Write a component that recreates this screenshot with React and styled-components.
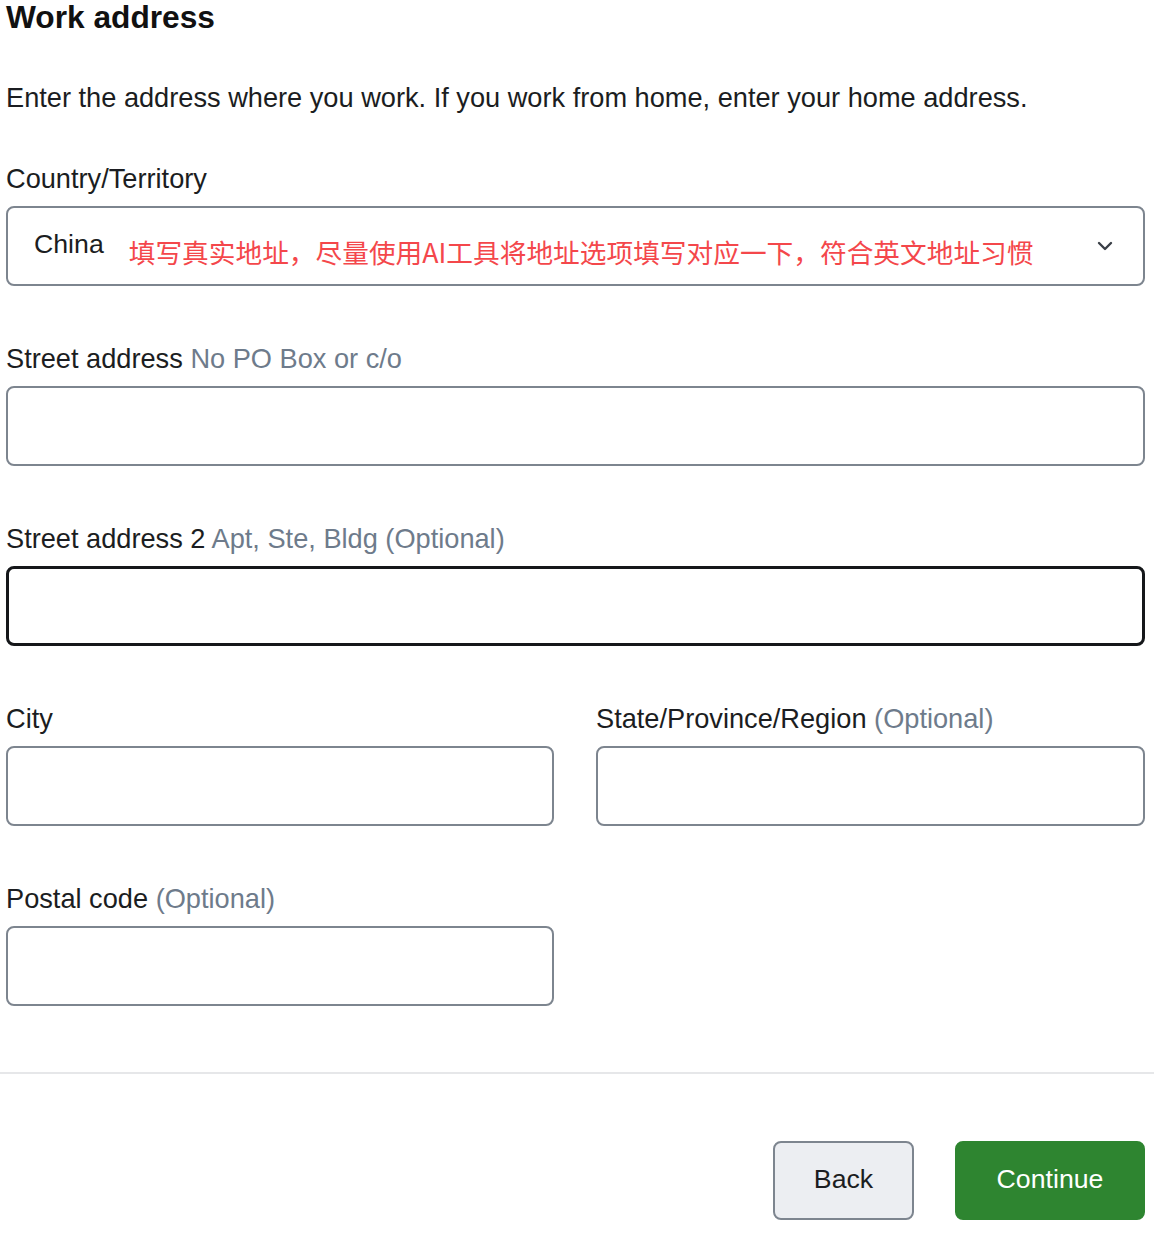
import styled, { createGlobalStyle } from 'styled-components'

const GlobalStyle = createGlobalStyle`
  html, body {
    margin: 0;
    padding: 0;
    background: #fff;
  }
  body {
    font-family: 'Liberation Sans', Arial, sans-serif;
    color: #1b1d21;
  }
  * {
    box-sizing: border-box;
  }
`

const Page = styled.div`
  width: 1154px;
  height: 1235px;
  overflow: hidden;
`

const Form = styled.div`
  padding: 0 9px 0 6px;
`

const Title = styled.h1`
  margin: 0;
  font-size: 31.7px;
  line-height: 34px;
  font-weight: 700;
  color: #111;
`

const Intro = styled.p`
  margin: 48px 0 49px;
  font-size: 27.2px;
  line-height: 32px;
`

const Field = styled.div`
  display: flex;
  flex-direction: column;
  gap: 11px;
  margin-bottom: 57px;
`

const Label = styled.label`
  font-size: 27.2px;
  line-height: 32px;
  color: #1b1d21;

  span {
    color: #6e7b8b;
  }
`

const Box = styled.div`
  height: 80px;
  border: ${(p) => (p.$focused ? '3px solid #15171a' : '2px solid #7d858f')};
  border-radius: 8px;
  background: #fff;
`

const Select = styled(Box)`
  display: flex;
  align-items: center;
  padding: 0 30px 0 26px;
`

const SelectValue = styled.span`
  font-size: 26.7px;
  line-height: 32px;
  margin-top: -4px;
`

const Note = styled.span`
  flex: 1;
  margin: 12px 0 0 25px;
  font-family: 'Noto Sans CJK SC', sans-serif;
  font-size: 26.7px;
  line-height: 30px;
  color: #f4474b;
  white-space: nowrap;
`

const Row = styled.div`
  display: grid;
  grid-template-columns: 548px 549px;
  column-gap: 42px;
`

const Divider = styled.hr`
  margin: 9px 0 0;
  border: none;
  border-top: 2px solid #e6e7e9;
`

const Actions = styled.div`
  display: flex;
  justify-content: flex-end;
  gap: 41px;
  padding: 67px 9px 0 0;
`

const Button = styled.button`
  height: 79px;
  padding: 0 0 2px;
  width: ${(p) => p.$width}px;
  border-radius: 8px;
  font-family: 'Liberation Sans', Arial, sans-serif;
  font-size: 26.7px;
  cursor: pointer;
  border: ${(p) => (p.$primary ? '2px solid #2e8530' : '2px solid #7d858f')};
  background: ${(p) => (p.$primary ? '#2e8530' : '#eceef2')};
  color: ${(p) => (p.$primary ? '#fff' : '#1b1d21')};
`

function Chevron() {
  return (
    <svg width="16" height="10" viewBox="0 0 16 10" fill="none">
      <path d="M2 2l6 6 6-6" stroke="#3a3f47" strokeWidth="2.4" strokeLinecap="round" strokeLinejoin="round" />
    </svg>
  )
}

export default function App() {
  return (
    <Page>
      <GlobalStyle />
      <Form>
        <Title>Work address</Title>
        <Intro>Enter the address where you work. If you work from home, enter your home address.</Intro>

        <Field>
          <Label>Country/Territory</Label>
          <Select>
            <SelectValue>China</SelectValue>
            <Note>填写真实地址，尽量使用AI工具将地址选项填写对应一下，符合英文地址习惯</Note>
            <Chevron />
          </Select>
        </Field>

        <Field>
          <Label>
            Street address <span>No PO Box or c/o</span>
          </Label>
          <Box />
        </Field>

        <Field>
          <Label>
            Street address 2 <span>Apt, Ste, Bldg (Optional)</span>
          </Label>
          <Box $focused />
        </Field>

        <Row>
          <Field>
            <Label>City</Label>
            <Box />
          </Field>
          <Field>
            <Label>
              State/Province/Region <span>(Optional)</span>
            </Label>
            <Box />
          </Field>
        </Row>

        <Row>
          <Field>
            <Label>
              Postal code <span>(Optional)</span>
            </Label>
            <Box />
          </Field>
        </Row>
      </Form>

      <Divider />

      <Actions>
        <Button $width={141}>Back</Button>
        <Button $primary $width={190}>Continue</Button>
      </Actions>
    </Page>
  )
}
